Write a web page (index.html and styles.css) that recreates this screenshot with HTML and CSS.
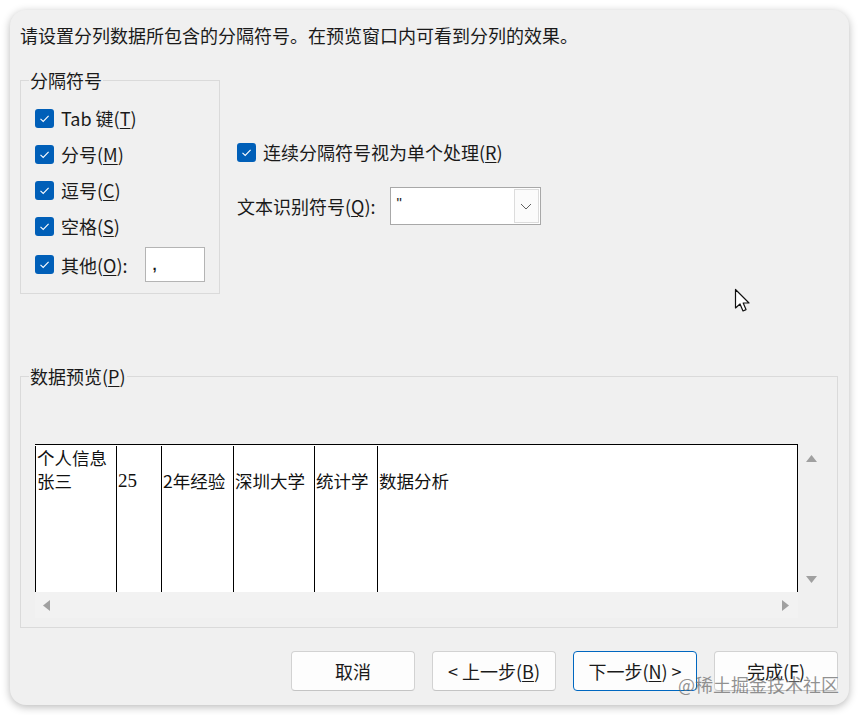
FILE: index.html
```html
<!DOCTYPE html>
<html lang="zh-CN">
<head>
<meta charset="utf-8">
<title>文本分列向导</title>
<link rel="stylesheet" href="styles.css">
</head>
<body>
<div class="dialog">
  <div class="intro">请设置分列数据所包含的分隔符号。在预览窗口内可看到分列的效果。</div>

  <div class="top">
    <fieldset class="group group-sep">
      <legend>分隔符号</legend>
      <label class="opt"><span class="cb"><svg width="19" height="19" viewBox="0 0 19 19"><rect width="19" height="19" rx="3" fill="#005fb8"/><polyline points="5.5,9.8 8.2,12.4 13.6,6.8" fill="none" stroke="#fff" stroke-width="1.1"/></svg></span>Tab 键(<u>T</u>)</label>
      <label class="opt"><span class="cb"><svg width="19" height="19" viewBox="0 0 19 19"><rect width="19" height="19" rx="3" fill="#005fb8"/><polyline points="5.5,9.8 8.2,12.4 13.6,6.8" fill="none" stroke="#fff" stroke-width="1.1"/></svg></span>分号(<u>M</u>)</label>
      <label class="opt"><span class="cb"><svg width="19" height="19" viewBox="0 0 19 19"><rect width="19" height="19" rx="3" fill="#005fb8"/><polyline points="5.5,9.8 8.2,12.4 13.6,6.8" fill="none" stroke="#fff" stroke-width="1.1"/></svg></span>逗号(<u>C</u>)</label>
      <label class="opt"><span class="cb"><svg width="19" height="19" viewBox="0 0 19 19"><rect width="19" height="19" rx="3" fill="#005fb8"/><polyline points="5.5,9.8 8.2,12.4 13.6,6.8" fill="none" stroke="#fff" stroke-width="1.1"/></svg></span>空格(<u>S</u>)</label>
      <div class="opt opt-last"><span class="cb"><svg width="19" height="19" viewBox="0 0 19 19"><rect width="19" height="19" rx="3" fill="#005fb8"/><polyline points="5.5,9.8 8.2,12.4 13.6,6.8" fill="none" stroke="#fff" stroke-width="1.1"/></svg></span>其他(<u>O</u>):<span class="textbox">,</span></div>
    </fieldset>

    <div class="right">
      <label class="opt"><span class="cb"><svg width="19" height="19" viewBox="0 0 19 19"><rect width="19" height="19" rx="3" fill="#005fb8"/><polyline points="5.5,9.8 8.2,12.4 13.6,6.8" fill="none" stroke="#fff" stroke-width="1.1"/></svg></span>连续分隔符号视为单个处理(<u>R</u>)</label>
      <div class="qual">
        <span>文本识别符号(<u>Q</u>):</span>
        <div class="select">
          <span class="sel-val">"</span>
          <span class="sel-btn"><svg width="12" height="7" viewBox="0 0 12 7"><polyline points="1,1 6,6 11,1" fill="none" stroke="#606060" stroke-width="1"/></svg></span>
        </div>
      </div>
    </div>
  </div>

  <fieldset class="group group-preview">
    <legend>数据预览(<u>P</u>)</legend>
    <div class="preview">
      <div class="sheet">
        <div class="col c1"><div>个人信息</div><div>张三</div></div>
        <div class="col c2"><div>&nbsp;</div><div>25</div></div>
        <div class="col c3"><div>&nbsp;</div><div>2年经验</div></div>
        <div class="col c4"><div>&nbsp;</div><div>深圳大学</div></div>
        <div class="col c5"><div>&nbsp;</div><div>统计学</div></div>
        <div class="col c6"><div>&nbsp;</div><div>数据分析</div></div>
      </div>
      <div class="vscroll">
        <svg width="13" height="9" viewBox="0 0 13 9"><polygon points="6.5,1 12,8 1,8" fill="#a0a0a0"/></svg>
        <svg width="13" height="9" viewBox="0 0 13 9"><polygon points="1,1 12,1 6.5,8" fill="#a0a0a0"/></svg>
      </div>
      <div class="hscroll">
        <svg width="9" height="13" viewBox="0 0 9 13"><polygon points="8,1 8,12 1,6.5" fill="#a0a0a0"/></svg>
        <svg width="9" height="13" viewBox="0 0 9 13"><polygon points="1,1 8,6.5 1,12" fill="#a0a0a0"/></svg>
      </div>
    </div>
  </fieldset>

  <div class="actions">
    <button class="btn">取消</button>
    <button class="btn">&lt; 上一步(<u>B</u>)</button>
    <button class="btn btn-default">下一步(<u>N</u>) &gt;</button>
    <button class="btn">完成(<u>F</u>)</button>
  </div>

  <div class="cursor"><svg width="20" height="30" viewBox="0 0 20 30"><path d="M1.5,1.5 L1.5,20 L6,16 L9,23 L12,21.6 L9.2,15 L15,15 Z" fill="#fff" stroke="#111" stroke-width="1.2" stroke-linejoin="round"/></svg></div>
  <div class="watermark">@稀土掘金技术社区</div>
</div>
</body>
</html>
```
FILE: styles.css
```css
* { box-sizing: border-box; }

body {
  margin: 0;
  background: #ffffff;
  font-family: "Noto Sans CJK SC", "Noto Sans", sans-serif;
  font-size: 18px;
  color: #1a1a1a;
}

u { text-decoration: underline; text-underline-offset: 2px; text-decoration-thickness: 1px; }

.dialog {
  position: relative;
  margin: 10px;
  width: 839px;
  height: 695px;
  background: #f0f0f0;
  border-radius: 16px;
  box-shadow: 0 2px 9px rgba(0, 0, 0, 0.28);
  padding: 0 11px 0 10px;
  display: flex;
  flex-direction: column;
  overflow: hidden;
}

.intro {
  margin-top: 13px;
  line-height: 24px;
  white-space: nowrap;
}

.top {
  display: flex;
  margin-top: 21px;
}

.group {
  margin: 0;
  border: 1px solid #dadada;
  min-inline-size: 0;
}

.group legend {
  padding: 0 1px;
  margin-left: -6px;
  line-height: 24px;
}

.group-sep {
  width: 200px;
  height: 226px;
  padding: 8px 0 0 14px;
}

.opt {
  display: flex;
  align-items: center;
  height: 36px;
  line-height: 24px;
  white-space: nowrap;
}

.cb {
  display: flex;
  width: 19px;
  height: 19px;
  margin-right: 7px;
}

.opt-last { height: 41px; }

.textbox {
  display: inline-flex;
  align-items: center;
  width: 60px;
  height: 35px;
  margin-left: 17px;
  background: #fff;
  border: 1px solid #b4b4b4;
  padding-left: 7px;
  font-family: "Liberation Sans", sans-serif;
  font-weight: bold;
  font-size: 15px;
}

.right {
  margin-left: 17px;
  padding-top: 66px;
  display: flex;
  flex-direction: column;
}

.qual {
  display: flex;
  align-items: center;
  margin-top: 17px;
  line-height: 24px;
  white-space: nowrap;
}

.select {
  display: flex;
  justify-content: space-between;
  margin-left: 14px;
  width: 151px;
  height: 38px;
  background: #fff;
  border: 1px solid #a8a8a8;
  padding: 1px;
}

.sel-val {
  padding-left: 5px;
  font-family: "Liberation Sans", sans-serif;
  font-size: 15px;
  line-height: 28px;
}

.sel-btn {
  display: flex;
  align-items: center;
  justify-content: center;
  width: 25px;
  height: 34px;
  background: #fbfbfb;
  border: 1px solid #dcdcdc;
}

.group-preview {
  margin-top: 70px;
  width: 818px;
  height: 264px;
  padding: 56px 0 9px 14px;
}

.preview {
  display: grid;
  grid-template-columns: 763px 27px;
  grid-template-rows: 148px 26px;
}

.sheet {
  display: flex;
  background: #fff;
  border-top: 1px solid #000;
  border-right: 1px solid #000;
  overflow: hidden;
  font-size: 17.5px;
  line-height: 23px;
  color: #111;
  padding-top: 1px;
}

.col {
  border-left: 1px solid #000;
  padding-left: 1px;
  white-space: nowrap;
}

.c1 { width: 81px; }
.c2 { width: 45px; font-family: "Liberation Serif", "Noto Sans CJK SC", serif; font-size: 19px; }
.c3 { width: 72px; }
.c4 { width: 81px; }
.c5 { width: 63px; }
.c6 { flex: 1; }

.vscroll {
  display: flex;
  flex-direction: column;
  justify-content: space-between;
  align-items: center;
  padding: 10px 0 8px;
}

.hscroll {
  display: flex;
  justify-content: space-between;
  align-items: center;
  padding: 0 8px 0 7px;
  background: #f2f2f2;
}

.actions {
  display: flex;
  justify-content: flex-end;
  gap: 17px;
  margin-top: 23px;
}

.btn {
  width: 124px;
  height: 40px;
  background: #fdfdfd;
  border: 1px solid #d2d2d2;
  border-bottom-color: #c4c4c4;
  border-radius: 4px;
  font-family: inherit;
  font-size: 18px;
  color: #1a1a1a;
  padding: 0;
}

.btn-default {
  border: 1px solid #0067c0;
}

.cursor {
  position: absolute;
  left: 724px;
  top: 278px;
}

.watermark {
  position: absolute;
  right: 10px;
  bottom: 10px;
  line-height: 22px;
  font-size: 18px;
  color: rgba(110, 110, 110, 0.75);
  white-space: nowrap;
}
```
